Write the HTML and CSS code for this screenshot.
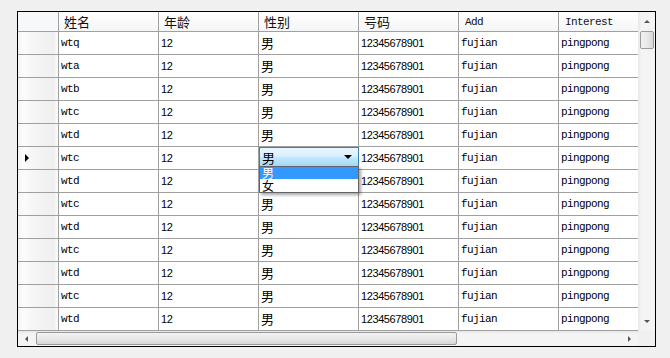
FILE: index.html
```html
<!DOCTYPE html>
<html lang="zh">
<head>
    <meta charset="UTF-8">
    <title>DataGridView</title>
    <link rel="stylesheet" href="styles.css">
</head>
<body>
    <div class="frame">
        <div class="top">
            <div class="view">
                <div class="row head">
                    <div class="rh corner-cell"></div>
                    <div class="hc cjk">姓名</div>
                    <div class="hc cjk">年龄</div>
                    <div class="hc cjk">性别</div>
                    <div class="hc cjk">号码</div>
                    <div class="hc">Add</div>
                    <div class="hc">Interest</div>
                </div>
                <div id="rows"></div>
            </div>
            <div class="vscroll">
                <div class="arrow up"></div>
                <div class="vthumb"></div>
                <div class="vtrack"></div>
                <div class="arrow down"></div>
            </div>
        </div>
        <div class="bottom">
            <div class="hscroll">
                <div class="arrow left"></div>
                <div class="hthumb"></div>
                <div class="htrack"></div>
                <div class="arrow right"></div>
            </div>
            <div class="corner"></div>
        </div>
    </div>

    <script>
        // 表格数据
        const names = ['wtq', 'wta', 'wtb', 'wtc', 'wtd', 'wtc', 'wtd', 'wtc', 'wtd', 'wtc', 'wtd', 'wtc', 'wtd'];
        const editRow = 5;

        let html = '';
        names.forEach((name, i) => {
            const mark = i === editRow ? '<span class="tri"></span>' : '';
            let sex = '<div class="c cjk sex">男</div>';
            if (i === editRow) {
                sex = `
                    <div class="c cjk sex edit">
                        <div class="combo"><span>男</span><i class="drop"></i></div>
                        <div class="list">
                            <div class="item on">男</div>
                            <div class="item">女</div>
                        </div>
                    </div>`;
            }
            html += `
                <div class="row">
                    <div class="rh">${mark}</div>
                    <div class="c">${name}</div>
                    <div class="c num">12</div>
                    ${sex}
                    <div class="c num">12345678901</div>
                    <div class="c">fujian</div>
                    <div class="c">pingpong</div>
                </div>`;
        });
        document.getElementById('rows').innerHTML = html;
    </script>
</body>
</html>
```

FILE: styles.css
```css
body {
    margin: 0;
    background-color: #f0f0f0;
    font-family: "Liberation Mono", "Noto Sans CJK SC", monospace;
    font-size: 11px;
    color: #000;
}

.frame {
    margin: 11px 0 0 17px;
    width: 639px;
    height: 336px;
    box-sizing: border-box;
    border: 1px solid #000;
    background-color: #fff;
    display: flex;
    flex-direction: column;
}

.top {
    display: flex;
    height: 319px;
}

.view {
    width: 620px;
    overflow: hidden;
}

.row {
    display: flex;
    height: 23px;
}

.row.head {
    height: 20px;
}

.rh {
    flex: 0 0 41px;
    box-sizing: border-box;
    border-right: 1px solid #a0a0a0;
    border-bottom: 1px solid #a0a0a0;
    background: linear-gradient(to right, #f4f5f7 0, #fcfcfd 6px, #f7f7f7 12px, #efeff0 36px, #fafafa 39px);
    display: flex;
    align-items: center;
}

.corner-cell {
    background: #f7f8fa;
}

.tri {
    margin-left: 7px;
    width: 0;
    height: 0;
    border-left: 4px solid #000;
    border-top: 4px solid transparent;
    border-bottom: 4px solid transparent;
}

.hc {
    flex: 0 0 100px;
    box-sizing: border-box;
    border-right: 1px solid #a0a0a0;
    border-bottom: 1px solid #a0a0a0;
    background: linear-gradient(#ffffff, #f4f5f7);
    padding-left: 6px;
    display: flex;
    align-items: center;
    letter-spacing: -0.6px;
    color: #111;
}

.hc.cjk {
    padding-left: 5px;
    font-size: 13px;
    letter-spacing: 0;
}

.c {
    flex: 0 0 100px;
    box-sizing: border-box;
    border-right: 1px solid #a0a0a0;
    border-bottom: 1px solid #a0a0a0;
    padding-left: 2px;
    display: flex;
    align-items: center;
    letter-spacing: -0.6px;
    white-space: nowrap;
}

.c.num {
    font-family: "Liberation Sans", sans-serif;
    font-size: 11px;
    letter-spacing: -0.4px;
}

.c.cjk {
    font-family: "Noto Sans CJK SC", sans-serif;
    font-size: 13px;
    letter-spacing: 0;
    padding-bottom: 1px;
}

.sex.edit {
    position: relative;
}

.combo {
    position: absolute;
    top: 0;
    left: 0;
    width: 100px;
    height: 20px;
    box-sizing: border-box;
    border: 1px solid #3c7fb1;
    background: linear-gradient(#eaf6fd 0%, #d9f0fc 45%, #bee6fd 55%, #a7d9f5 100%);
    display: flex;
    align-items: center;
    justify-content: space-between;
    padding: 0 6px 0 2px;
    z-index: 2;
}

.drop {
    width: 0;
    height: 0;
    border-top: 4px solid #000;
    border-left: 4px solid transparent;
    border-right: 4px solid transparent;
}

.list {
    position: absolute;
    top: 19px;
    left: 0;
    width: 100px;
    height: 27px;
    box-sizing: border-box;
    border: 1px solid #646464;
    background-color: #fff;
    box-shadow: 2px 2px 3px rgba(0, 0, 0, 0.35);
    z-index: 3;
}

.item {
    height: 12px;
    line-height: 12px;
    padding-left: 2px;
    font-size: 12px;
}

.item + .item {
    height: 13px;
    line-height: 13px;
}

.item.on {
    background-color: #3399ff;
    color: #fff;
}

/* 滚动条 */
.vscroll {
    width: 17px;
    background: linear-gradient(to right, #e6e6e6, #f4f4f4 3px, #f4f4f4);
    display: flex;
    flex-direction: column;
    align-items: center;
}

.vthumb {
    margin-top: 1px;
    width: 14px;
    height: 18px;
    box-sizing: border-box;
    border: 1px solid #9a9a9a;
    border-radius: 2px;
    background: linear-gradient(to right, #f3f3f3, #e8e8e8 50%, #d8d8d8);
}

.vtrack {
    flex: 1;
}

.bottom {
    display: flex;
    height: 15px;
}

.hscroll {
    width: 620px;
    background: linear-gradient(#e6e6e6, #f4f4f4 3px, #f4f4f4);
    display: flex;
    align-items: center;
}

.hthumb {
    margin-left: 1px;
    width: 421px;
    height: 13px;
    box-sizing: border-box;
    border: 1px solid #9a9a9a;
    border-radius: 2px;
    background: linear-gradient(#f3f3f3, #e8e8e8 50%, #d6d6d6);
}

.htrack {
    flex: 1;
}

.corner {
    width: 17px;
    background-color: #f0f0f0;
}

.arrow {
    flex: 0 0 auto;
    width: 0;
    height: 0;
}

.arrow.up {
    margin: 8px 0 7px;
    border-bottom: 3px solid #555;
    border-left: 3px solid transparent;
    border-right: 3px solid transparent;
}

.arrow.down {
    margin: 7px 0 8px;
    border-top: 3px solid #555;
    border-left: 3px solid transparent;
    border-right: 3px solid transparent;
}

.arrow.left {
    margin: 0 7px 0 7px;
    border-right: 3px solid #555;
    border-top: 3px solid transparent;
    border-bottom: 3px solid transparent;
}

.arrow.right {
    margin: 0 7px 0 7px;
    border-left: 3px solid #555;
    border-top: 3px solid transparent;
    border-bottom: 3px solid transparent;
}
```
